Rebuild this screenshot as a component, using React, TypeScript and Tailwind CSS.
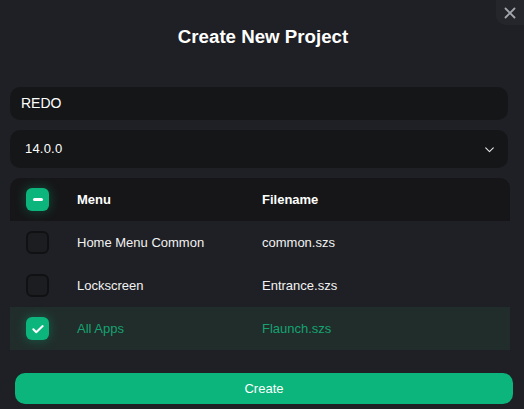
import React from "react";

function Check({ state }: { state: "none" | "some" | "all" }) {
  if (state === "none") {
    return <div className="w-[23px] h-[23px] rounded-[6px] bg-[#1c1d21] border-2 border-[#101113]" />;
  }
  return (
    <div className="w-[23px] h-[23px] rounded-[6px] bg-[#0cb57b] flex items-center justify-center shadow-[0_0_10px_2px_rgba(12,181,123,0.25)]">
      {state === "some" ? (
        <div className="w-[10px] h-[2.5px] bg-white rounded-sm" />
      ) : (
        <svg width="14" height="14" viewBox="0 0 24 24" fill="none" stroke="white" strokeWidth="3.5" strokeLinecap="round" strokeLinejoin="round">
          <path d="M4 12.5l5 5L20 7" />
        </svg>
      )}
    </div>
  );
}

const rows = [
  { menu: "Home Menu Common", file: "common.szs", sel: false },
  { menu: "Lockscreen", file: "Entrance.szs", sel: false },
  { menu: "All Apps", file: "Flaunch.szs", sel: true },
];

export default function App() {
  return (
    <div
      className="w-[524px] h-[409px] bg-[#1f2025] relative overflow-hidden text-white"
      style={{ fontFamily: '"Liberation Sans", Arial, sans-serif' }}
    >
      <div className="absolute top-0 right-0 w-[28px] h-[25px] bg-[#24262b] rounded-bl-[10px] flex items-center justify-center">
        <svg width="12" height="12" viewBox="0 0 12 12" stroke="#a3a6ad" strokeWidth="1.8" strokeLinecap="round">
          <path d="M1.5 1.5l9 9M10.5 1.5l-9 9" />
        </svg>
      </div>

      <div className="pt-[26px] text-center text-[18.7px] font-bold leading-[22px] pl-[2px]">Create New Project</div>

      <div className="mt-[39px] ml-[10px] w-[498px] h-[33px] rounded-[10px] bg-[#151618] flex items-center pl-[11px] text-[14px]">
        REDO
      </div>

      <div className="mt-[10px] ml-[10px] w-[498px] h-[38px] rounded-[10px] bg-[#151618] flex items-center justify-between pl-[15px] pr-[12px] text-[13px] font-medium">
        <span className="tracking-[0.2px]">14.0.0</span>
        <svg width="13" height="13" viewBox="0 0 24 24" fill="none" stroke="#e5e7eb" strokeWidth="2" strokeLinecap="round" strokeLinejoin="round">
          <path d="M5 9l7 7 7-7" />
        </svg>
      </div>

      <div className="mt-[10px] ml-[10px] w-[500px] h-[172px] overflow-hidden rounded-t-[10px] text-[13px]">
        <div className="h-[43px] bg-[#161618] flex items-center font-bold">
          <div className="w-[67px] pl-[16px]">
            <Check state="some" />
          </div>
          <div className="w-[185px]">Menu</div>
          <div>Filename</div>
        </div>
        {rows.map((r) => (
          <div
            key={r.menu}
            className={`h-[43px] flex items-center ${r.sel ? "bg-[#212d2b] text-[#15a371]" : "text-[#f2f2f2]"}`}
          >
            <div className="w-[67px] pl-[16px]">
              <Check state={r.sel ? "all" : "none"} />
            </div>
            <div className="w-[185px]">{r.menu}</div>
            <div>{r.file}</div>
          </div>
        ))}
      </div>

      <div className="mt-[23px] ml-[15px] w-[498px] h-[31px] rounded-[10px] bg-[#0cb57b] flex items-center justify-center text-[13px] font-medium">
        Create
      </div>
    </div>
  );
}
